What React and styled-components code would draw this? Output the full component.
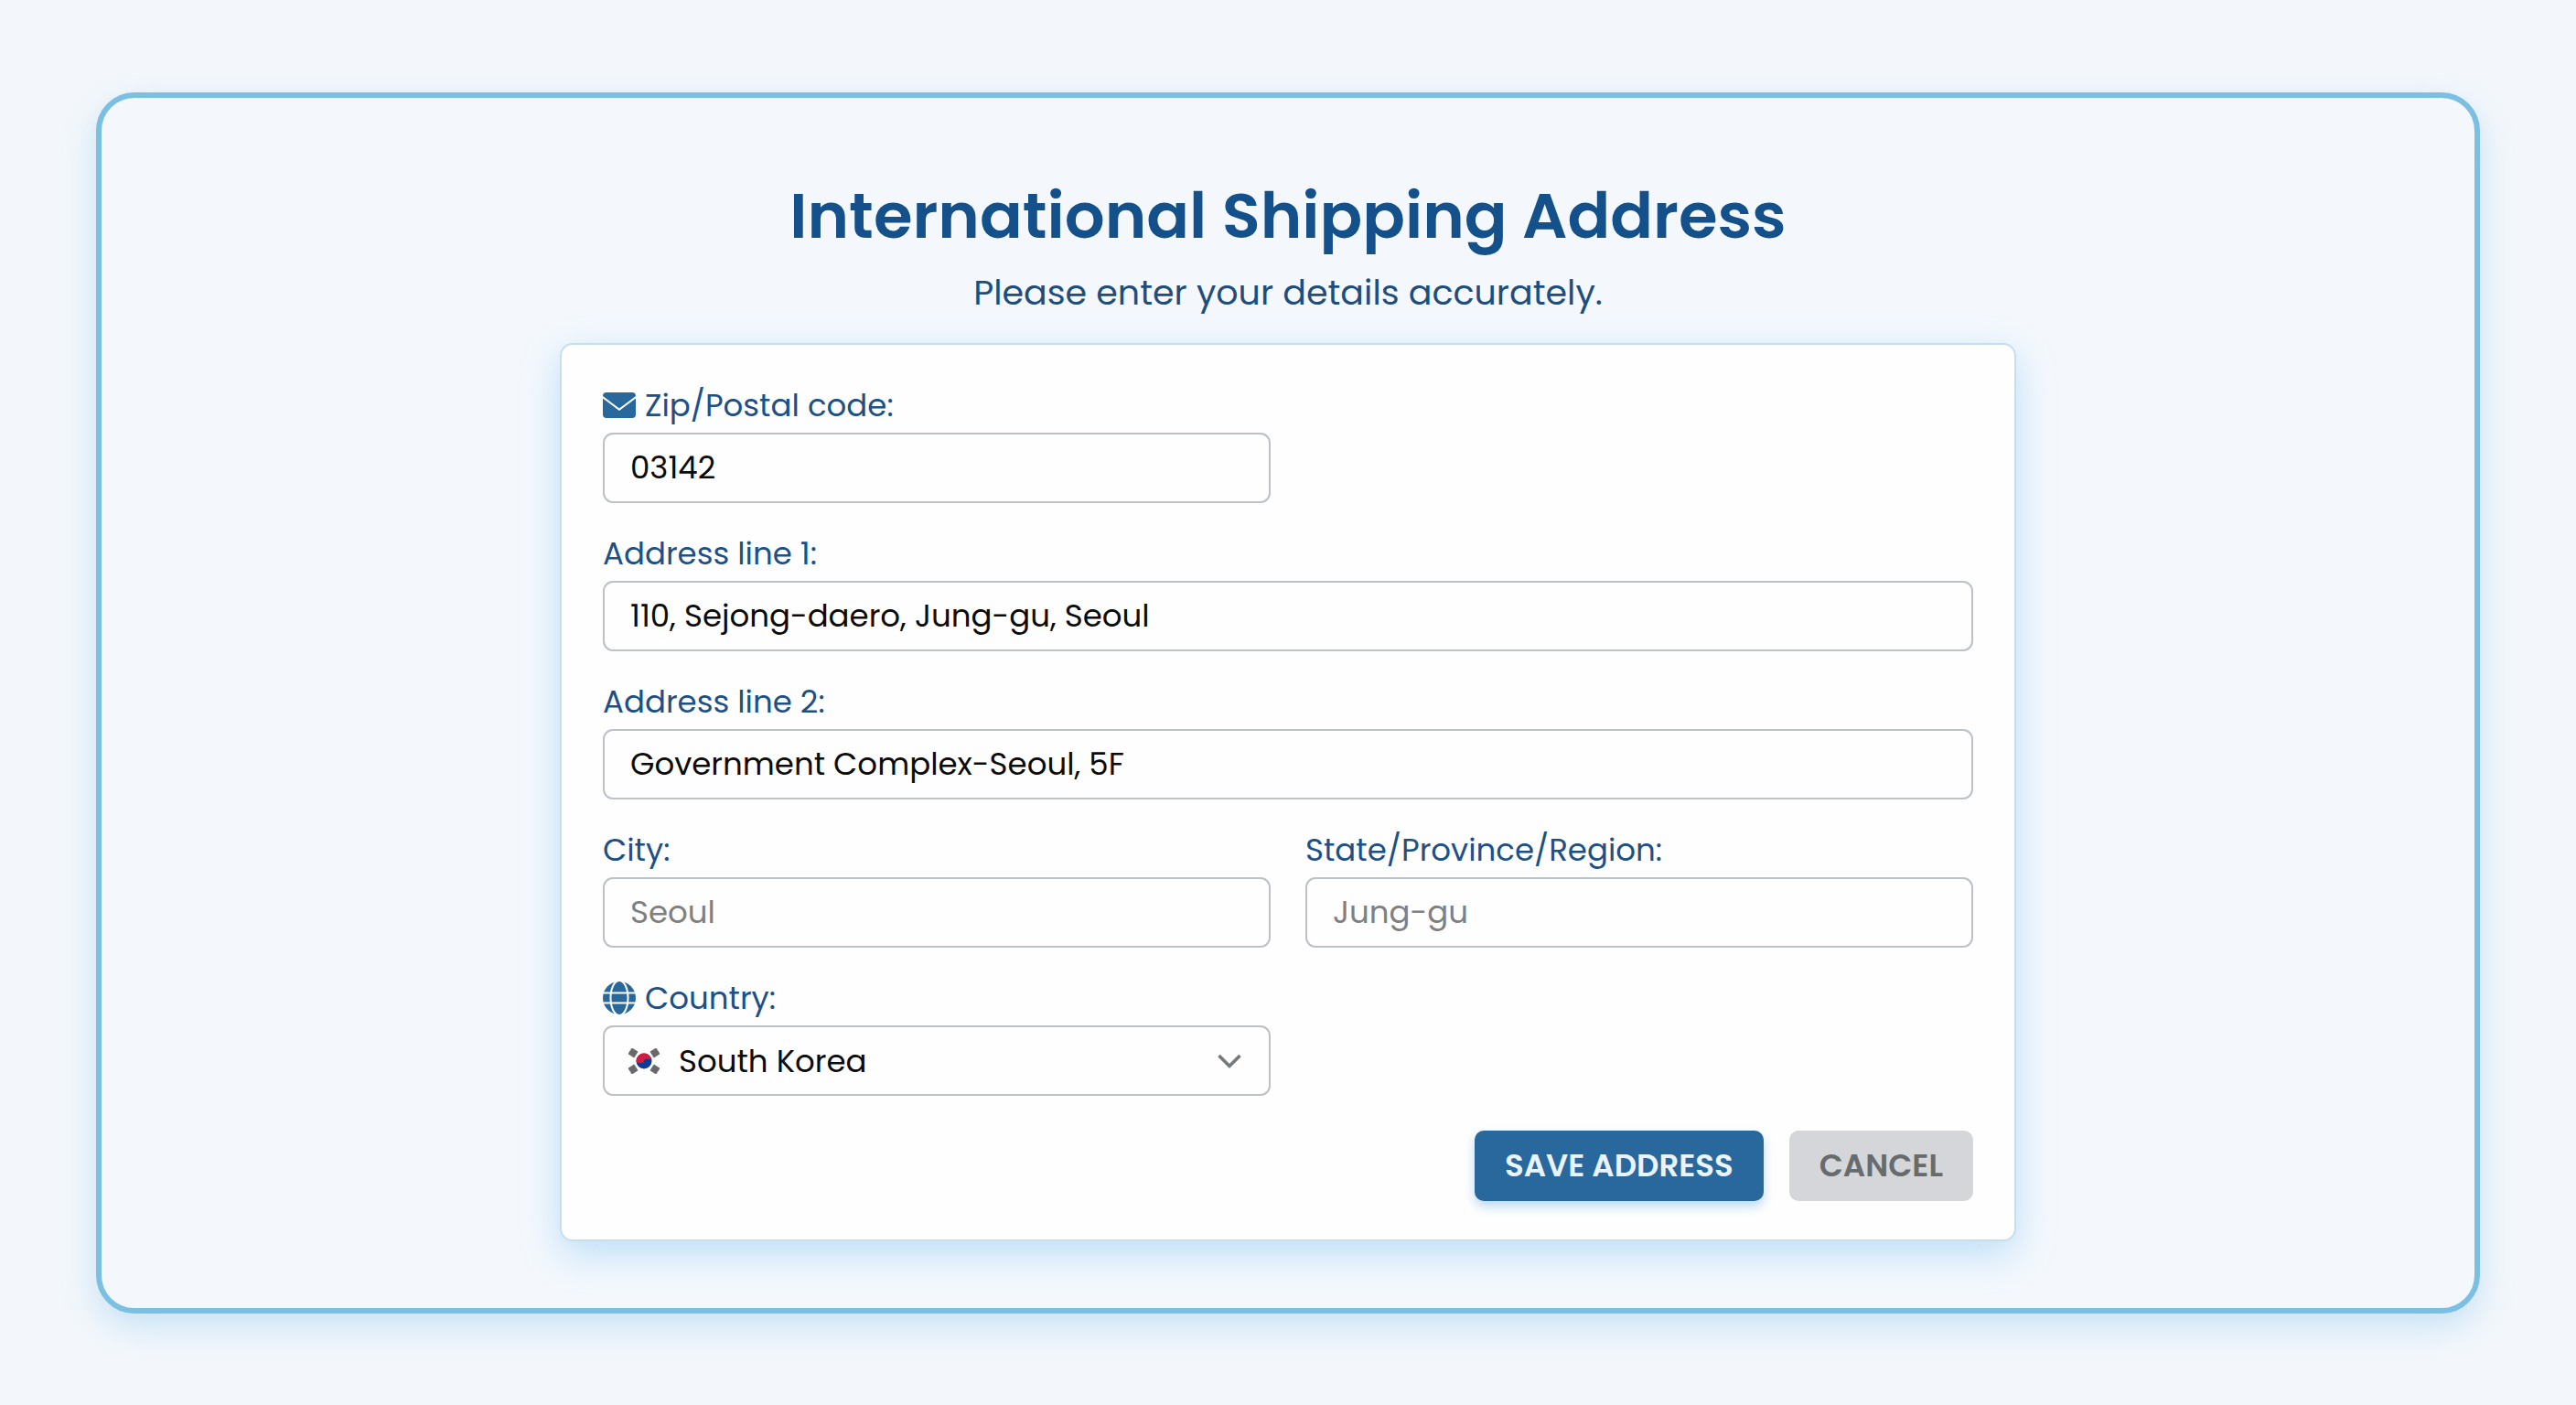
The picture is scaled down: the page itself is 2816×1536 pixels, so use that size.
import React from "react"
import styled, { createGlobalStyle } from "styled-components"

const GlobalStyle = createGlobalStyle`
  :root {
    --primary: #28689c;
    --heading: #14508a;
    --text: #0b0b0b;
    --label: #1d5085;
    --background: #f3f7fb;
  }
  * {
    box-sizing: border-box;
  }
  body {
    margin: 0;
    background-color: var(--background);
    font-family: Poppins, "Open Sans", sans-serif;
  }
`
const Page = styled.div`
  min-height: 100vh;
  padding: 101px 105px 100px;
`
const Frame = styled.main`
  display: flex;
  flex-direction: column;
  align-items: center;
  padding: 85px 40px 73px;
  border: 6px solid #7bc0e3;
  border-radius: 42px;
  background-color: #f4f8fd;
  box-shadow: 0px 14px 36px rgba(110, 185, 235, 0.32);
`
const Header = styled.header`
  display: flex;
  flex-direction: column;
  gap: 12px;
  margin-bottom: 27px;
  text-align: center;
`
const Title = styled.h1`
  margin: 0;
  font-size: 69px;
  font-weight: 600;
  line-height: 88px;
  color: var(--heading);
`
const Subtitle = styled.p`
  margin: 0;
  font-size: 38px;
  line-height: 56px;
  color: #1f4e7c;
`
const Form = styled.form`
  display: grid;
  grid-template-columns: 1fr 1fr;
  gap: 31px 38px;
  width: 100%;
  max-width: 1592px;
  padding: 42px 45px 42px;
  border: 2px solid #c5dfef;
  border-radius: 14px;
  background-color: #fefefe;
  box-shadow: 0px 14px 40px rgba(110, 185, 235, 0.4);
`
const Field = styled.div`
  display: flex;
  flex-direction: column;
  gap: 6px;
  grid-column: ${(p) => p.$column || "auto"};
`
const Label = styled.label`
  display: flex;
  align-items: center;
  gap: 10px;
  font-size: 34px;
  line-height: 48px;
  color: var(--label);

  & > svg {
    width: 36px;
    height: 36px;
    color: var(--primary);
  }
`
const Input = styled.input`
  width: 100%;
  height: 77px;
  padding: 0px 28px;
  border: 2px solid #bcc0c7;
  border-radius: 11px;
  background-color: #fefefe;
  font-family: inherit;
  font-size: 34px;
  color: var(--text);

  &::placeholder {
    color: #808080;
    opacity: 1;
  }
`
const SelectBox = styled.div`
  position: relative;
`
const Select = styled(Input)`
  display: block;
  padding: 0px 80px 0px 81px;
  appearance: none;
`
const Overlay = styled.div`
  position: absolute;
  inset: 0px;
  display: flex;
  align-items: center;
  justify-content: space-between;
  padding: 0px 32px 0px 28px;
  pointer-events: none;
`
const Actions = styled.div`
  grid-column: 1 / -1;
  display: flex;
  justify-content: flex-end;
  gap: 28px;
  padding-top: 7px;
`
const Button = styled.button`
  height: 77px;
  padding: 0px 33px;
  border: none;
  border-radius: 10px;
  font-family: inherit;
  font-size: 34px;
  font-weight: 600;
  color: ${(p) => (p.$primary ? "#e9f3fc" : "#686b6e")};
  background-color: ${(p) => (p.$primary ? "var(--primary)" : "#d4d6d9")};
  box-shadow: ${(p) => (p.$primary ? "0px 6px 12px rgba(90, 165, 225, 0.4)" : "none")};
`

function EnvelopeIcon() {
  return (
    <svg viewBox="0 0 36 36" fill="currentColor" aria-hidden="true">
      <path d="M4 4H32A4 4 0 0 1 36 8L18 21.500L0 8A4 4 0 0 1 4 4Z" />
      <path d="M0 10.500L18 24L36 10.500V28A4 4 0 0 1 32 32H4A4 4 0 0 1 0 28Z" />
    </svg>
  )
}

function GlobeIcon() {
  return (
    <svg viewBox="0 0 36 36" aria-hidden="true">
      <circle cx="18" cy="18" r="18" fill="currentColor" />
      <g fill="none" stroke="#fefefe" strokeWidth="2">
        <ellipse cx="18" cy="18" rx="9.500" ry="19" />
        <path d="M0 12.500H36M0 23.500H36" />
      </g>
    </svg>
  )
}

function FlagIcon() {
  return (
    <svg width="34" height="28" viewBox="0 0 34 28" aria-hidden="true">
      <g fill="#69696b">
        <rect x="1" y="1" width="8" height="8" transform="rotate(33 5 5)" />
        <rect x="25" y="1" width="8" height="8" transform="rotate(-33 29 5)" />
        <rect x="1" y="19" width="8" height="8" transform="rotate(-33 5 23)" />
        <rect x="25" y="19" width="8" height="8" transform="rotate(33 29 23)" />
      </g>
      <circle cx="17" cy="14" r="8.500" fill="#0e3a94" />
      <path d="M8.500 14A8.500 8.500 0 0 1 25.500 14A4.250 2.200 0 0 0 17 14A4.250 2.200 0 0 1 8.500 14Z" fill="#d01c3f" />
    </svg>
  )
}

function ChevronIcon() {
  return (
    <svg width="26" height="18" viewBox="0 0 26 18" aria-hidden="true">
      <path d="M1.500 3L13 14.500L24.500 3" fill="none" stroke="#75797c" strokeWidth="3.600" />
    </svg>
  )
}

export default function App() {
  return (
    <Page>
      <GlobalStyle />
      <Frame>
        <Header>
          <Title>International Shipping Address</Title>
          <Subtitle>Please enter your details accurately.</Subtitle>
        </Header>
        <Form onSubmit={(e) => e.preventDefault()}>
          <Field $column="1">
            <Label htmlFor="zip">
              <EnvelopeIcon /> Zip/Postal code:
            </Label>
            <Input id="zip" defaultValue="03142" />
          </Field>
          <Field $column="1 / -1">
            <Label htmlFor="line1">Address line 1:</Label>
            <Input id="line1" defaultValue="110, Sejong-daero, Jung-gu, Seoul" />
          </Field>
          <Field $column="1 / -1">
            <Label htmlFor="line2">Address line 2:</Label>
            <Input id="line2" defaultValue="Government Complex-Seoul, 5F" />
          </Field>
          <Field>
            <Label htmlFor="city">City:</Label>
            <Input id="city" placeholder="Seoul" />
          </Field>
          <Field>
            <Label htmlFor="state">State/Province/Region:</Label>
            <Input id="state" placeholder="Jung-gu" />
          </Field>
          <Field $column="1">
            <Label htmlFor="country">
              <GlobeIcon /> Country:
            </Label>
            <SelectBox>
              <Select as="select" id="country" defaultValue="KR">
                <option value="KR">South Korea</option>
              </Select>
              <Overlay>
                <FlagIcon />
                <ChevronIcon />
              </Overlay>
            </SelectBox>
          </Field>
          <Actions>
            <Button type="submit" $primary>SAVE ADDRESS</Button>
            <Button type="button">CANCEL</Button>
          </Actions>
        </Form>
      </Frame>
    </Page>
  )
}
